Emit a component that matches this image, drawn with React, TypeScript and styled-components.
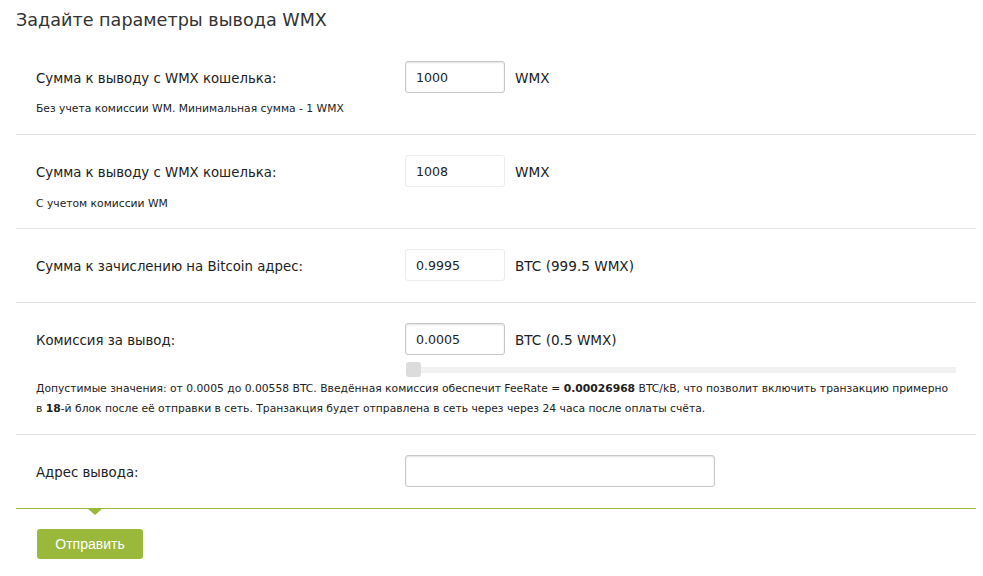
import React from "react";
import styled, { createGlobalStyle } from "styled-components";

const GlobalStyle = createGlobalStyle`
  body {
    margin: 0;
    background: #fff;
    font-family: "DejaVu Sans", Verdana, sans-serif;
    color: #222;
  }
`;

const Page = styled.div`
  width: 960px;
  padding-left: 16px;
`;

const Title = styled.h2`
  margin: 0;
  padding-top: 10px;
  font-size: 17.6px;
  line-height: 21px;
  font-weight: normal;
  color: #333;
  height: 31px;
`;

const Row = styled.div<{ $last?: boolean; $pb?: number }>`
  padding: 20px 20px ${(p) => p.$pb ?? 21}px 20px;
  border-bottom: 1px solid ${(p) => (p.$last ? "#9ab83a" : "#e2e2e2")};
  position: relative;
`;

const Line = styled.div`
  display: grid;
  grid-template-columns: 369px 1fr;
  align-items: center;
`;

const Label = styled.div`
  font-size: 13.3px;
  line-height: 18px;
  padding-top: 3px;
`;

const Field = styled.div`
  display: flex;
  align-items: center;
  gap: 10px;
`;

const Input = styled.input<{ $readonly?: boolean; $wide?: boolean }>`
  box-sizing: border-box;
  width: ${(p) => (p.$wide ? "310px" : "100px")};
  height: 32px;
  padding: 0 10px;
  font-family: "DejaVu Sans", Verdana, sans-serif;
  font-size: 12.6px;
  color: #222;
  background: #fff;
  border-radius: 3px;
  outline: none;
  border: 1px solid ${(p) => (p.$readonly ? "#ececec" : "#c8c8c8")};
  box-shadow: ${(p) => (p.$readonly ? "none" : "inset 0 1px 2px rgba(0,0,0,0.12)")};
`;

const Unit = styled.span`
  font-size: 13.6px;
  padding-top: 1px;
`;

const Note = styled.div<{ $lh?: number; $gap?: number }>`
  margin-top: ${(p) => p.$gap ?? 8}px;
  font-size: 10.75px;
  line-height: ${(p) => p.$lh ?? 15}px;
  color: #222;
  white-space: nowrap;
`;

const SliderWrap = styled.div`
  display: grid;
  grid-template-columns: 369px 1fr;
  margin-top: 7px;
`;

const Track = styled.div`
  grid-column: 2;
  position: relative;
  height: 6px;
  margin-top: 5px;
  margin-left: 2px;
  background: #f1f1f1;
`;

const Thumb = styled.div`
  position: absolute;
  left: -1px;
  top: -5px;
  width: 15px;
  height: 15px;
  border-radius: 3px;
  background: #dcdcdc;
`;

const Arrow = styled.div`
  position: absolute;
  left: 71px;
  bottom: -7px;
  width: 0;
  height: 0;
  border-left: 8px solid transparent;
  border-right: 8px solid transparent;
  border-top: 7px solid #9ab83a;
`;

const Footer = styled.div`
  padding: 20px 21px;
`;

const Button = styled.button`
  width: 106px;
  height: 30px;
  border: none;
  border-radius: 3px;
  background: #9ab83a;
  color: #fff;
  font-family: "Liberation Sans", Arial, sans-serif;
  font-size: 14px;
  cursor: pointer;
`;

export default function App() {
  return (
    <>
      <GlobalStyle />
      <Page>
        <Title>Задайте параметры вывода WMX</Title>

        <Row $pb={18}>
          <Line>
            <Label>Сумма к выводу с WMX кошелька:</Label>
            <Field>
              <Input defaultValue="1000" />
              <Unit>WMX</Unit>
            </Field>
          </Line>
          <Note>Без учета комиссии WM. Минимальная сумма - 1 WMX</Note>
        </Row>

        <Row $pb={17}>
          <Line>
            <Label>Сумма к выводу с WMX кошелька:</Label>
            <Field>
              <Input $readonly readOnly defaultValue="1008" />
              <Unit>WMX</Unit>
            </Field>
          </Line>
          <Note $gap={9}>С учетом комиссии WM</Note>
        </Row>

        <Row>
          <Line>
            <Label>Сумма к зачислению на Bitcoin адрес:</Label>
            <Field>
              <Input $readonly readOnly defaultValue="0.9995" />
              <Unit>BTC (999.5 WMX)</Unit>
            </Field>
          </Line>
        </Row>

        <Row $pb={15}>
          <Line>
            <Label>Комиссия за вывод:</Label>
            <Field>
              <Input defaultValue="0.0005" />
              <Unit>BTC (0.5 WMX)</Unit>
            </Field>
          </Line>
          <SliderWrap>
            <Track>
              <Thumb />
            </Track>
          </SliderWrap>
          <Note $lh={20} $gap={6}>
            Допустимые значения: от 0.0005 до 0.00558 BTC. Введённая комиссия обеспечит FeeRate ={" "}
            <b>0.00026968</b> BTC/kB, что позволит включить транзакцию примерно
            <br />в <b>18</b>-й блок после её отправки в сеть. Транзакция будет отправлена в сеть через
            через 24 часа после оплаты счёта.
          </Note>
        </Row>

        <Row $last>
          <Line>
            <Label>Адрес вывода:</Label>
            <Field>
              <Input $wide />
            </Field>
          </Line>
          <Arrow />
        </Row>

        <Footer>
          <Button>Отправить</Button>
        </Footer>
      </Page>
    </>
  );
}
